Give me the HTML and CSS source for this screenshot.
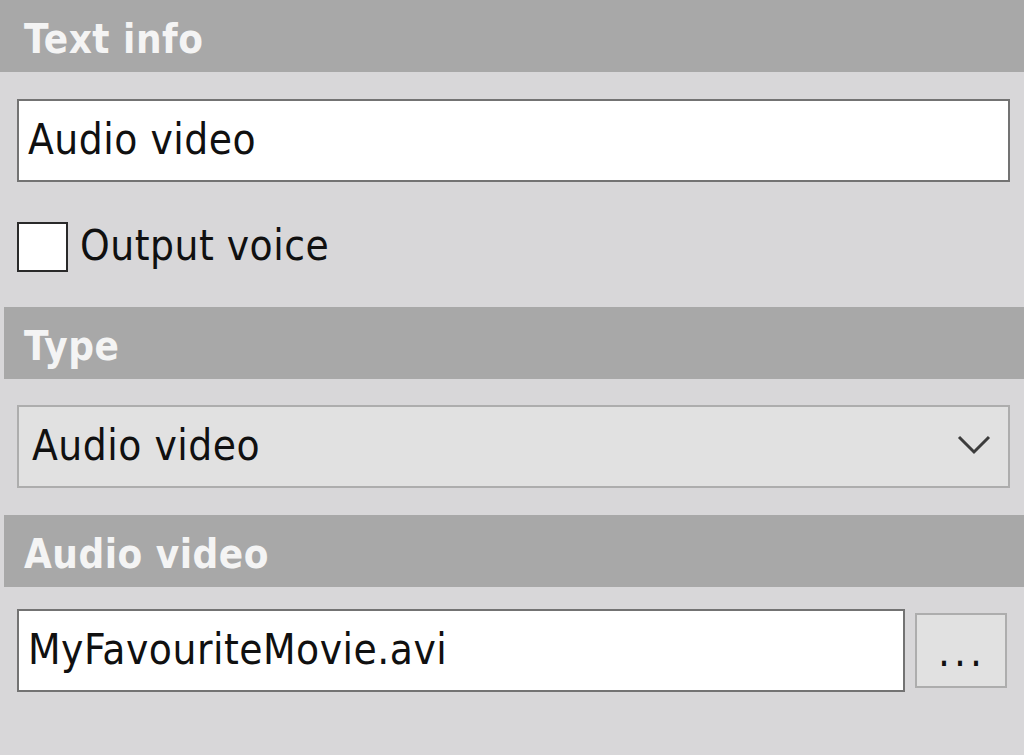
FILE: index.html
```html
<!DOCTYPE html>
<html>
<head>
<meta charset="utf-8">
<link rel="stylesheet" href="styles.css">
</head>
<body>
<div class="panel">
  <div class="section-header first">Text info</div>
  <div class="textbox wide"><span>Audio video</span></div>
  <div class="check-row">
    <span class="checkbox"></span>
    <span class="check-label">Output voice</span>
  </div>
  <div class="section-header type">Type</div>
  <div class="combo">
    <span>Audio video</span>
    <svg class="chevron" width="34" height="22" viewBox="0 0 34 22"><path d="M2 3 L17 18 L32 3" fill="none" stroke="#3c3c3c" stroke-width="3"/></svg>
  </div>
  <div class="section-header av">Audio video</div>
  <div class="file-row">
    <div class="textbox file"><span>MyFavouriteMovie.avi</span></div>
    <div class="browse">...</div>
  </div>
</div>
</body>
</html>
```
FILE: styles.css
```css
* { box-sizing: border-box; }
html, body {
  margin: 0;
  padding: 0;
  width: 1024px;
  height: 755px;
  background: #d8d7d9;
  overflow: hidden;
}
.panel {
  display: flex;
  flex-direction: column;
  font-family: "DejaVu Sans Condensed", "DejaVu Sans", sans-serif;
  font-size: 42px;
  letter-spacing: 0.5px;
  color: #101010;
}
.section-header {
  height: 72px;
  background: #a8a8a8;
  color: #f4f4f4;
  font-weight: bold;
  font-size: 40px;
  letter-spacing: 0.5px;
  padding-left: 20px;
  display: flex;
  align-items: center;
  margin-left: 4px;
  padding-top: 6px;
}
.section-header.first {
  margin-left: 0;
  padding-left: 24px;
  padding-top: 5px;
}
.section-header.type { margin-top: 35px; }
.section-header.av { margin-top: 27px; }
.textbox {
  background: #ffffff;
  border: 2px solid #737373;
  height: 83px;
  display: flex;
  align-items: center;
  padding-left: 9px;
  padding-bottom: 2px;
  white-space: nowrap;
}
.textbox.wide {
  margin: 27px 0 0 17px;
  width: 993px;
}
.check-row {
  display: flex;
  align-items: center;
  margin: 40px 0 0 17px;
  height: 50px;
}
.checkbox {
  width: 51px;
  height: 50px;
  background: #ffffff;
  border: 2px solid #2a2a2a;
}
.check-label {
  margin-left: 12px;
  padding-bottom: 4px;
}
.combo {
  margin: 26px 0 0 17px;
  width: 993px;
  height: 83px;
  background: #e1e1e1;
  border: 2px solid #adadad;
  display: flex;
  align-items: center;
  justify-content: space-between;
  padding: 0 17px 2px 13px;
}
.chevron { display: block; margin-top: -2px; }
.file-row {
  display: flex;
  align-items: center;
  margin: 22px 0 0 17px;
  height: 83px;
}
.textbox.file {
  width: 888px;
  height: 83px;
}
.browse {
  margin-left: 10px;
  width: 92px;
  height: 75px;
  background: #e1e1e1;
  border: 2px solid #adadad;
  display: flex;
  align-items: center;
  justify-content: center;
  letter-spacing: 4px;
  padding: 0 0 0 2px;
  line-height: 1;
  padding-top: 2px;
}
```
